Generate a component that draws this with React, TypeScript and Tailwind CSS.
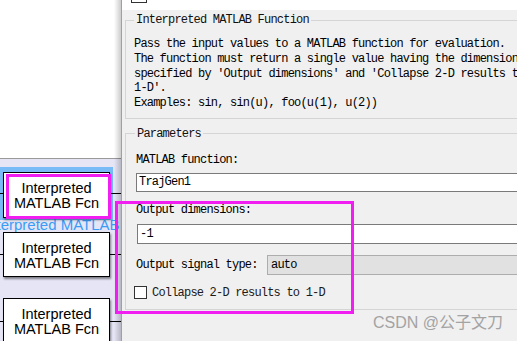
import React from "react";

const mono = "font-['Liberation_Mono','Courier_New',monospace] text-[12px] tracking-[-0.8px]";

type BlockProps = { top: number; height: number; portY: number };

// Simulink block on the model canvas
const Block: React.FC<BlockProps> = ({ top, height, portY }) => (
  <>
    <div
      className="absolute left-[3px] w-[107px] border border-black bg-white shadow-[1px_2px_2px_rgba(0,0,0,0.45)] flex flex-col items-center pt-[8px] font-['Liberation_Sans',Arial,sans-serif] text-[14.5px] leading-[15px] text-black"
      style={{ top, height }}
    >
      <span>Interpreted</span>
      <span>MATLAB Fcn</span>
    </div>
    <div className="absolute left-0 h-px w-[3px] bg-black" style={{ top: portY }} />
    <div className="absolute left-[110px] h-px w-[14px] bg-black" style={{ top: portY }} />
  </>
);

const Canvas: React.FC = () => (
  <div className="relative w-[121px] shrink-0 overflow-hidden flex flex-col">
    <div className="h-[159px] bg-white border-b border-[#9a9a9a]" />
    <div className="flex-1 bg-[#e5e5f6]" />

    {/* selected block highlight + name */}
    <div className="absolute left-0 top-[167px] h-[53px] w-[113px] bg-[#78bbf6]" />
    <div className="absolute left-[-16px] top-[217px] whitespace-nowrap font-['Liberation_Sans',Arial,sans-serif] text-[15px] leading-[16px] text-[#3a9cf5]">
      Interpreted MATLAB Function
    </div>

    <Block top={172} height={46} portY={193} />
    <Block top={232} height={45} portY={254} />
    <Block top={298} height={52} portY={321} />

    {/* annotation around first block */}
    <div className="absolute left-[6px] top-[174px] h-[45px] w-[105px] border-[3px] border-[#f01ef0]" />

    {/* dialog shadow */}
    <div className="absolute right-0 top-0 h-full w-[7px] bg-gradient-to-r from-transparent to-black/20" />
  </div>
);

const Edit: React.FC<{ value: string; className?: string }> = ({ value, className }) => (
  <div
    className={`h-[19px] border border-[#7a7a7a] bg-white pl-[2px] flex items-center text-black ${mono} ${className ?? ""}`}
  >
    {value}
  </div>
);

const Dialog: React.FC = () => (
  <div className="flex-1 min-w-0 overflow-hidden border-l border-[#a0a0a0] bg-[#f0f0f0]">
    <div className="w-[480px]">
      {/* top of previous panel */}
      <div className="h-[10px] bg-white pl-[9px]">
        <div className="h-[3px] w-[16px] border-x border-b border-[#333] bg-white" />
      </div>

      <fieldset className="mt-[3px] ml-[3px] border border-[#d5d5d5] px-[8px] pt-[10px] pb-[7px]">
        <legend className={`px-[2px] leading-[14px] text-[#111] ${mono}`}>
          Interpreted MATLAB Function
        </legend>
        <div className={`whitespace-pre leading-[14.75px] text-black ${mono}`}>
          {"Pass the input values to a MATLAB function for evaluation.\n" +
            "The function must return a single value having the dimensions\n" +
            "specified by 'Output dimensions' and 'Collapse 2-D results to\n" +
            "1-D'.\n" +
            "Examples: sin, sin(u), foo(u(1), u(2))"}
        </div>
      </fieldset>

      <fieldset className="mt-[8px] ml-[3px] border border-[#d5d5d5] px-[10px] pt-[12px] pb-[9px]">
        <legend className={`-ml-[1px] px-[2px] leading-[14px] text-[#111] ${mono}`}>Parameters</legend>

        <div className={`leading-[14px] text-black ${mono}`}>MATLAB function:</div>
        <Edit value="TrajGen1" className="mt-[6px]" />

        <div className={`mt-[11px] leading-[14px] text-black ${mono}`}>Output dimensions:</div>
        <Edit value="-1" className="mt-[7px] ml-[1px] h-[20px]" />

        <div className="mt-[11px] flex items-center">
          <div className={`w-[131px] shrink-0 leading-[14px] text-black ${mono}`}>
            Output signal type:
          </div>
          <div
            className={`h-[20px] flex-1 border border-[#adadad] bg-[#e1e1e1] pl-[3px] flex items-center text-black ${mono}`}
          >
            auto
          </div>
        </div>

        <div className="mt-[11px] -ml-[2px] flex items-center gap-[5px]">
          <div className="h-[13px] w-[13px] border border-[#333] bg-white" />
          <span className={`leading-[14px] text-[#1a1a1a] ${mono}`}>Collapse 2-D results to 1-D</span>
        </div>
      </fieldset>
    </div>
  </div>
);

export default function App() {
  return (
    <div className="relative flex h-[341px] w-[517px] overflow-hidden bg-[#f0f0f0]">
      <Canvas />
      <Dialog />

      {/* annotation around dimension settings */}
      <div className="absolute left-[115px] top-[201px] h-[113px] w-[239px] border-[3px] border-[#f01ef0]" />

      <div className="absolute left-[373px] top-[313px] font-['Liberation_Sans','Noto_Sans_CJK_SC',sans-serif] text-[16px] leading-[20px] text-[#a3a3a3]">
        CSDN @公子文刀
      </div>
    </div>
  );
}
